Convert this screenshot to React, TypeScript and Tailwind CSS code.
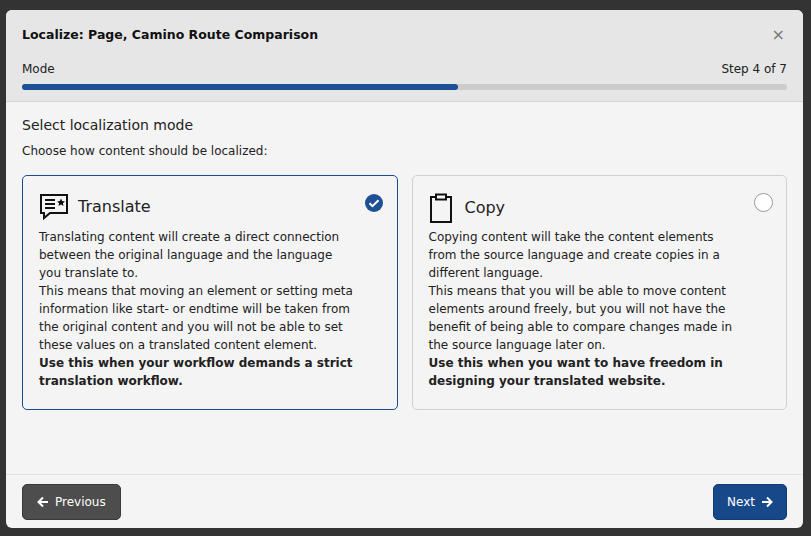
import React from "react";

const F = { fontFamily: '"DejaVu Sans", Verdana, sans-serif' };

function TranslateIcon() {
  return (
    <svg width="30" height="28" viewBox="0 0 30 28" fill="none" stroke="#111" strokeWidth="2">
      <path d="M2 2h26v18H11l-6 5v-5H2z" strokeLinejoin="miter" />
      <path d="M6 7h10M6 11h10M6 15h10" />
      <path d="M22 5.5l1.2 2.6 2.8.3-2.1 1.9.6 2.8-2.5-1.5-2.5 1.5.6-2.8-2.1-1.9 2.8-.3z" fill="#111" stroke="none" />
    </svg>
  );
}
function CopyIcon() {
  return (
    <svg width="24" height="30" viewBox="0 0 24 30" fill="none" stroke="#111" strokeWidth="2">
      <rect x="2" y="4" width="20" height="25" />
      <rect x="7" y="1.5" width="10" height="5" fill="#f4f4f4" />
    </svg>
  );
}

export default function App() {
  return (
    <div style={F} className="w-[811px] h-[536px] bg-[#333] pt-[10px] px-[6px] overflow-hidden">
      <div className="w-[797px] h-[518px] rounded-[6px] bg-[#f4f4f4] flex flex-col overflow-hidden">
        <div className="bg-[#e6e6e6] border-b border-[#d4d4d4] px-4 pt-[17px] pb-[11px]">
          <div className="flex justify-between items-center h-[16px]">
            <span className="text-[12.5px] font-bold text-[#111]">Localize: Page, Camino Route Comparison</span>
            <span className="text-[16px] text-[#777] mr-[2px]">×</span>
          </div>
          <div className="flex justify-between mt-[17px] text-[12px] text-[#222]">
            <span>Mode</span>
            <span>Step 4 of 7</span>
          </div>
          <div className="mt-[6px] h-[6px] rounded-full bg-[#ccc]">
            <div className="h-full w-[57%] rounded-full bg-[#1e5096]" />
          </div>
        </div>
        <div className="flex-1 px-4 pt-[13px]">
          <div className="text-[14px] text-[#222]">Select localization mode</div>
          <div className="text-[12px] text-[#222] mt-[6px]">Choose how content should be localized:</div>
          <div className="grid grid-cols-2 gap-[14px] mt-[15px]">
            <div className="h-[235px] rounded-[5px] border border-[#1e4b8a] px-4 pt-[17px]">
              <div className="flex items-start justify-between">
                <div className="flex items-center gap-[9px]">
                  <TranslateIcon />
                  <span className="text-[16px] text-[#222]">Translate</span>
                </div>
                <svg width="20" height="20" viewBox="0 0 20 20" className="-mr-[3px]">
                  <circle cx="10" cy="10" r="9" fill="#1e5096" />
                  <path d="M5.5 10.2l3 3 6-6" stroke="#fff" strokeWidth="2" fill="none" />
                </svg>
              </div>
              <div className="text-[12px] leading-[18px] text-[#222] mt-[7px] w-[318px]">
                Translating content will create a direct connection between the original language and the language you translate to.<br />
                This means that moving an element or setting meta information like start- or endtime will be taken from the original content and you will not be able to set these values on a translated content element.<br />
                <b>Use this when your workflow demands a strict translation workflow.</b>
              </div>
            </div>
            <div className="h-[235px] rounded-[5px] border border-[#d0d0d0] px-4 pt-[17px]">
              <div className="flex items-start justify-between">
                <div className="flex items-center gap-[12px]">
                  <CopyIcon />
                  <span className="text-[16px] text-[#222]">Copy</span>
                </div>
                <div className="w-[19px] h-[19px] rounded-full border border-[#999] bg-white -mr-[3px]" />
              </div>
              <div className="text-[12px] leading-[18px] text-[#222] mt-[5px] w-[310px]">
                Copying content will take the content elements from the source language and create copies in a different language.<br />
                This means that you will be able to move content elements around freely, but you will not have the benefit of being able to compare changes made in the source language later on.<br />
                <b>Use this when you want to have freedom in designing your translated website.</b>
              </div>
            </div>
          </div>
        </div>
        <div className="border-t border-[#e2e2e2] h-[54px] px-4 flex items-center justify-between">
          <button className="h-[36px] px-[14px] rounded-[5px] bg-[#4d4d4d] border border-[#3a3a3a] text-white text-[12px] flex items-center gap-[6px]">
            <svg width="12" height="12" viewBox="0 0 12 12" stroke="#fff" strokeWidth="2" fill="none"><path d="M11 6H2M6 1.5L1.5 6 6 10.5" /></svg>
            Previous
          </button>
          <button className="h-[36px] px-[13px] rounded-[5px] bg-[#17498a] border border-[#103a70] text-white text-[12px] flex items-center gap-[6px]">
            Next
            <svg width="12" height="12" viewBox="0 0 12 12" stroke="#fff" strokeWidth="2" fill="none"><path d="M1 6h9M6 1.5L10.5 6 6 10.5" /></svg>
          </button>
        </div>
      </div>
    </div>
  );
}
